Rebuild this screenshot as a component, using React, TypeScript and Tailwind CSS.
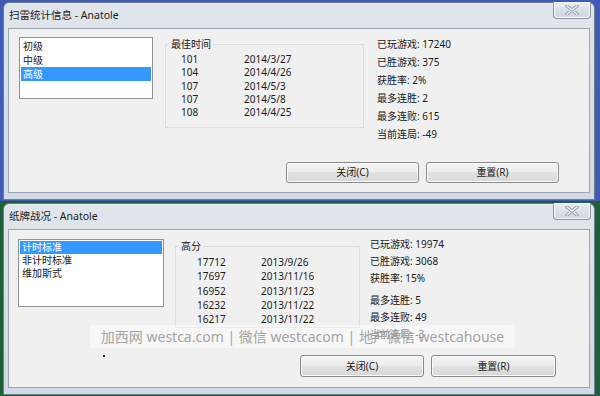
import React from "react";

const font = "font-['Noto_Sans','Noto_Sans_CJK_SC',sans-serif]";

function CloseButton() {
  return (
    <div className="w-[38px] h-[17px] rounded-b-[4px] border border-t-0 border-[#8b95a3] bg-gradient-to-b from-[#e9edf2] to-[#cfd6df] shadow-[inset_0_0_0_1px_#f4f6f9] flex items-center justify-center">
      <svg width="14" height="10" viewBox="0 0 14 10">
        <path d="M2 1 L12 9 M12 1 L2 9" stroke="#8c96a3" strokeWidth="3.2" strokeLinecap="round" />
        <path d="M2 1 L12 9 M12 1 L2 9" stroke="#f7f8fa" strokeWidth="1.4" strokeLinecap="round" />
      </svg>
    </div>
  );
}

function Win7Button({ label, w, h }: { label: string; w: string; h: string }) {
  return (
    <div
      className={`${w} ${h} rounded-[3px] border border-[#8a8a8a] bg-[linear-gradient(#f4f4f4_0%,#ececec_50%,#e2e2e2_50%,#d8d8d8_100%)] shadow-[inset_0_0_0_1px_#fbfbfb] flex items-center justify-center text-[10px] text-[#1a1a1a]`}
    >
      {label}
    </div>
  );
}

function Window({
  title,
  height,
  children,
}: {
  title: string;
  height: string;
  children: React.ReactNode;
}) {
  return (
    <div
      className={`${height} flex flex-col rounded-t-[6px] border border-[#6f7c8d] bg-gradient-to-b from-[#e1e6ed] via-[#d7dde6] to-[#d2d9e2] px-[4px] pb-[6px]`}
    >
      <div className="h-[25px] flex items-start justify-between">
        <span className="mt-[4px] ml-[1px] text-[10.5px] leading-[16px] text-[#1c1c1c]">
          {title}
        </span>
        <div className="-mt-[1px] mr-[-1px]">
          <CloseButton />
        </div>
      </div>
      <div className="flex-1 flex flex-col border border-[#9ba6b3] bg-[#f0f0f0]">
        {children}
      </div>
    </div>
  );
}

function ListBox({
  items,
  selected,
  className,
  lh,
}: {
  items: string[];
  selected: number;
  className: string;
  lh: string;
}) {
  return (
    <div className={`${className} border border-[#8e949c] bg-white p-[1px] text-[10px]`}>
      {items.map((it, i) => (
        <div
          key={it}
          className={`${lh} pl-[2px] ${
            i === selected ? "bg-[#3399ff] text-white" : "text-[#1a1a1a]"
          }`}
        >
          {it}
        </div>
      ))}
    </div>
  );
}

const mineTimes = [
  ["101", "2014/3/27"],
  ["104", "2014/4/26"],
  ["107", "2014/5/3"],
  ["107", "2014/5/8"],
  ["108", "2014/4/25"],
];

const cardScores = [
  ["17712", "2013/9/26"],
  ["17697", "2013/11/16"],
  ["16952", "2013/11/23"],
  ["16232", "2013/11/22"],
  ["16217", "2013/11/22"],
];

export default function App() {
  return (
    <div className={`${font} relative w-[600px] h-[396px] overflow-hidden`}>
      {/* Minesweeper stats */}
      <div className="h-[201px] bg-[#3f5bb5] pt-[2px] pl-[3px] pr-[5px]">
        <Window title="扫雷统计信息 - Anatole" height="h-[198px]">
          <div className="flex items-start pt-[6px] pl-[10px]">
            <ListBox
              items={["初级", "中级", "高级"]}
              selected={2}
              lh="leading-[14px]"
              className="mt-[2px] w-[134px] h-[62px]"
            />
            <fieldset className="mt-[2px] ml-[12px] w-[199px] border border-[#d5dfe5] pb-[8px]">
              <legend className="ml-[3px] px-[2px] text-[10px] leading-[14px] text-[#1a1a1a]">
                最佳时间
              </legend>
              <div className="pt-[2px] text-[10px] text-[#1a1a1a]">
                {mineTimes.map(([t, d], i) => (
                  <div key={i} className="flex leading-[13.25px]">
                    <span className="pl-[15px] w-[78px]">{t}</span>
                    <span>{d}</span>
                  </div>
                ))}
              </div>
            </fieldset>
            <div className="ml-[13px] text-[10px] leading-[18px] text-[#1a1a1a]">
              <div>已玩游戏: 17240</div>
              <div>已胜游戏: 375</div>
              <div>获胜率: 2%</div>
              <div>最多连胜: 2</div>
              <div>最多连败: 615</div>
              <div>当前连局: -49</div>
            </div>
          </div>
          <div className="mt-auto flex justify-end gap-[7px] pr-[30px] pb-[9px]">
            <Win7Button label="关闭(C)" w="w-[133px]" h="h-[21px]" />
            <Win7Button label="重置(R)" w="w-[133px]" h="h-[21px]" />
          </div>
        </Window>
      </div>

      {/* Solitaire stats */}
      <div className="h-[195px] bg-[#1d5f37] pt-[2px] pl-[3px] pr-[5px]">
        <Window title="纸牌战况 - Anatole" height="h-[192px]">
          <div className="flex items-start pt-[6px] pl-[9px]">
            <ListBox
              items={["计时标准", "非计时标准", "维加斯式"]}
              selected={0}
              lh="leading-[13px]"
              className="mt-[3px] w-[146px] h-[68px]"
            />
            <fieldset className="mt-[3px] ml-[11px] w-[185px] border border-[#d5dfe5] pb-[1px]">
              <legend className="ml-[3px] px-[2px] text-[10px] leading-[14px] text-[#1a1a1a]">
                高分
              </legend>
              <div className="pt-[2px] text-[10px] text-[#1a1a1a]">
                {cardScores.map(([s, d], i) => (
                  <div key={i} className="flex leading-[14.25px]">
                    <span className="pl-[21px] w-[85px]">{s}</span>
                    <span>{d}</span>
                  </div>
                ))}
              </div>
            </fieldset>
            <div className="ml-[10px] text-[10px] leading-[17px] text-[#1a1a1a]">
              <div>已玩游戏: 19974</div>
              <div>已胜游戏: 3068</div>
              <div>获胜率: 15%</div>
              <div className="mt-[5px]">最多连胜: 5</div>
              <div>最多连败: 49</div>
              <div>当前连局: -3</div>
            </div>
          </div>
          <div className="mt-auto flex justify-end gap-[7px] pr-[33px] pb-[10px]">
            <Win7Button label="关闭(C)" w="w-[124px]" h="h-[22px]" />
            <Win7Button label="重置(R)" w="w-[125px]" h="h-[22px]" />
          </div>
        </Window>
      </div>

      {/* watermark overlay */}
      <div className="absolute left-[90px] top-[325px] w-[425px] h-[23px] bg-white/45 flex items-center justify-center text-[14px] leading-[23px] text-[#a4a4a4] whitespace-nowrap">
        加西网 westca.com | 微信 westcacom | 地产微信 westcahouse
      </div>
      <div className="absolute left-[103px] top-[355px] w-[2px] h-[2px] bg-[#222]" />
    </div>
  );
}
